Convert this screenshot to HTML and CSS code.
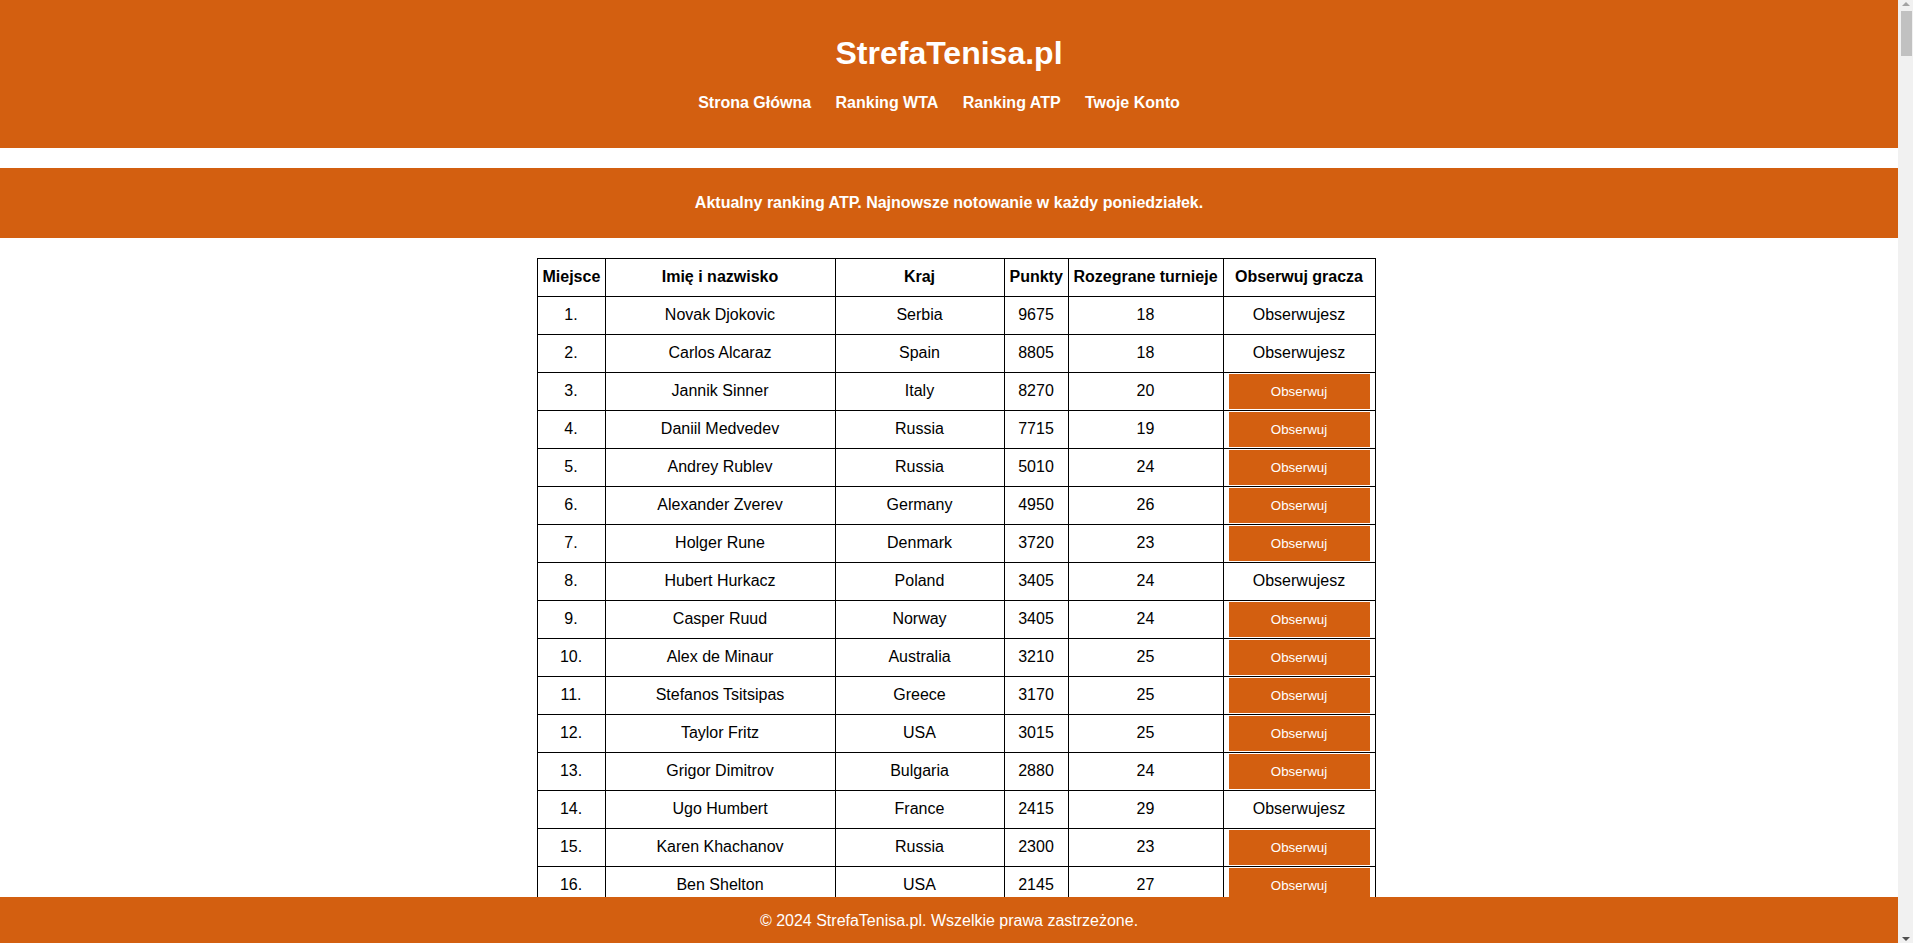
FILE: index.html
```html
<!DOCTYPE html>
<html lang="pl">
<head>
<meta charset="utf-8">
<title>StrefaTenisa.pl - Ranking ATP</title>
<link rel="stylesheet" href="styles.css">
</head>
<body>
<header class="site-header">
  <h1 class="site-title">StrefaTenisa.pl</h1>
  <nav>
    <ul class="nav-list">
      <li class="nav-item"><a class="nav-link" href="#">Strona Główna</a></li>
      <li class="nav-item"><a class="nav-link" href="#">Ranking WTA</a></li>
      <li class="nav-item"><a class="nav-link" href="#">Ranking ATP</a></li>
      <li class="nav-item"><a class="nav-link" href="#">Twoje Konto</a></li>
    </ul>
  </nav>
</header>

<section class="banner">
  <p class="banner-text">Aktualny ranking ATP. Najnowsze notowanie w każdy poniedziałek.</p>
</section>

<main class="content">
  <table class="rank-table">
    <colgroup>
      <col class="c-pos">
      <col class="c-name">
      <col class="c-country">
      <col class="c-points">
      <col class="c-played">
      <col class="c-follow">
    </colgroup>
    <thead>
      <tr>
        <th>Miejsce</th>
        <th>Imię i nazwisko</th>
        <th>Kraj</th>
        <th>Punkty</th>
        <th>Rozegrane turnieje</th>
        <th>Obserwuj gracza</th>
      </tr>
    </thead>
    <tbody>
      <tr><td>1.</td><td>Novak Djokovic</td><td>Serbia</td><td>9675</td><td>18</td><td>Obserwujesz</td></tr>
      <tr><td>2.</td><td>Carlos Alcaraz</td><td>Spain</td><td>8805</td><td>18</td><td>Obserwujesz</td></tr>
      <tr><td>3.</td><td>Jannik Sinner</td><td>Italy</td><td>8270</td><td>20</td><td class="act"><button class="follow-btn">Obserwuj</button></td></tr>
      <tr><td>4.</td><td>Daniil Medvedev</td><td>Russia</td><td>7715</td><td>19</td><td class="act"><button class="follow-btn">Obserwuj</button></td></tr>
      <tr><td>5.</td><td>Andrey Rublev</td><td>Russia</td><td>5010</td><td>24</td><td class="act"><button class="follow-btn">Obserwuj</button></td></tr>
      <tr><td>6.</td><td>Alexander Zverev</td><td>Germany</td><td>4950</td><td>26</td><td class="act"><button class="follow-btn">Obserwuj</button></td></tr>
      <tr><td>7.</td><td>Holger Rune</td><td>Denmark</td><td>3720</td><td>23</td><td class="act"><button class="follow-btn">Obserwuj</button></td></tr>
      <tr><td>8.</td><td>Hubert Hurkacz</td><td>Poland</td><td>3405</td><td>24</td><td>Obserwujesz</td></tr>
      <tr><td>9.</td><td>Casper Ruud</td><td>Norway</td><td>3405</td><td>24</td><td class="act"><button class="follow-btn">Obserwuj</button></td></tr>
      <tr><td>10.</td><td>Alex de Minaur</td><td>Australia</td><td>3210</td><td>25</td><td class="act"><button class="follow-btn">Obserwuj</button></td></tr>
      <tr><td>11.</td><td>Stefanos Tsitsipas</td><td>Greece</td><td>3170</td><td>25</td><td class="act"><button class="follow-btn">Obserwuj</button></td></tr>
      <tr><td>12.</td><td>Taylor Fritz</td><td>USA</td><td>3015</td><td>25</td><td class="act"><button class="follow-btn">Obserwuj</button></td></tr>
      <tr><td>13.</td><td>Grigor Dimitrov</td><td>Bulgaria</td><td>2880</td><td>24</td><td class="act"><button class="follow-btn">Obserwuj</button></td></tr>
      <tr><td>14.</td><td>Ugo Humbert</td><td>France</td><td>2415</td><td>29</td><td>Obserwujesz</td></tr>
      <tr><td>15.</td><td>Karen Khachanov</td><td>Russia</td><td>2300</td><td>23</td><td class="act"><button class="follow-btn">Obserwuj</button></td></tr>
      <tr><td>16.</td><td>Ben Shelton</td><td>USA</td><td>2145</td><td>27</td><td class="act"><button class="follow-btn">Obserwuj</button></td></tr>
      <tr><td>17.</td><td>Tommy Paul</td><td>USA</td><td>2125</td><td>24</td><td class="act"><button class="follow-btn">Obserwuj</button></td></tr>
      <tr><td>18.</td><td>Frances Tiafoe</td><td>USA</td><td>2050</td><td>25</td><td class="act"><button class="follow-btn">Obserwuj</button></td></tr>
      <tr><td>19.</td><td>Nicolas Jarry</td><td>Chile</td><td>1925</td><td>25</td><td class="act"><button class="follow-btn">Obserwuj</button></td></tr>
      <tr><td>20.</td><td>Sebastian Baez</td><td>Argentina</td><td>1830</td><td>28</td><td class="act"><button class="follow-btn">Obserwuj</button></td></tr>
    </tbody>
  </table>
</main>

<footer class="site-footer">
  <p class="footer-text">© 2024 StrefaTenisa.pl. Wszelkie prawa zastrzeżone.</p>
</footer>

<div class="scrollbar" aria-hidden="true">
  <span class="sb-arrow sb-up"></span>
  <span class="sb-thumb"></span>
  <span class="sb-arrow sb-down"></span>
</div>
</body>
</html>
```

FILE: styles.css
```css
html, body {
  margin: 0;
  padding: 0;
}

body {
  font-family: "Liberation Sans", Arial, sans-serif;
  font-size: 16px;
  color: #000;
  background: #fff;
  margin-right: 15px;
  padding-bottom: 60px;
}

.site-header {
  background: #d35f10;
  color: #fff;
  text-align: center;
  padding: 35px 0 36px;
}

.site-title {
  margin: 0 0 22px;
  font-size: 32px;
  font-weight: bold;
}

.nav-list {
  list-style: none;
  margin: 0;
  padding: 0;
}

.nav-item {
  display: inline;
  margin-right: 20px;
}

.nav-link {
  color: #fff;
  font-weight: bold;
  text-decoration: none;
}

.banner {
  background: #d35f10;
  color: #fff;
  margin-top: 20px;
  padding: 26px 0;
  text-align: center;
}

.banner-text {
  margin: 0;
  font-weight: bold;
}

.content {
  display: flex;
  justify-content: center;
  padding: 20px 0 0 14px;
}

.rank-table {
  border-collapse: collapse;
  table-layout: fixed;
  width: 838px;
}

.c-pos { width: 68px; }
.c-name { width: 230px; }
.c-country { width: 169px; }
.c-points { width: 64px; }
.c-played { width: 155px; }
.c-follow { width: 152px; }

.rank-table th,
.rank-table td {
  border: 1px solid #000;
  padding: 8px 5px 10px;
  line-height: 19px;
  text-align: center;
  white-space: nowrap;
  overflow: hidden;
}

.rank-table th {
  font-weight: bold;
}

.rank-table td.act {
  padding: 1px 5px;
}

.follow-btn {
  display: block;
  width: 100%;
  height: 35px;
  margin: 0;
  padding: 0;
  border: none;
  background: #d35f10;
  color: #fff;
  font-family: "Liberation Sans", Arial, sans-serif;
  font-size: 13.333px;
  cursor: pointer;
}

.site-footer {
  position: fixed;
  left: 0;
  right: 15px;
  bottom: 0;
  background: #d35f10;
  color: #fff;
  text-align: center;
  padding: 15px 0 13px;
}

.footer-text {
  margin: 0;
}

/* imitation of the browser's vertical scrollbar */
.scrollbar {
  position: fixed;
  top: 0;
  right: 0;
  bottom: 0;
  width: 15px;
  background: #f1f1f1;
}

.sb-arrow {
  position: absolute;
  left: 4px;
  width: 0;
  height: 0;
  border-left: 4px solid transparent;
  border-right: 4px solid transparent;
}

.sb-up {
  top: 2px;
  border-bottom: 4px solid #a3a3a3;
}

.sb-down {
  bottom: 2px;
  border-top: 4px solid #505050;
}

.sb-thumb {
  position: absolute;
  top: 11px;
  left: 3px;
  right: 1px;
  height: 45px;
  background: #c1c1c1;
}
```
